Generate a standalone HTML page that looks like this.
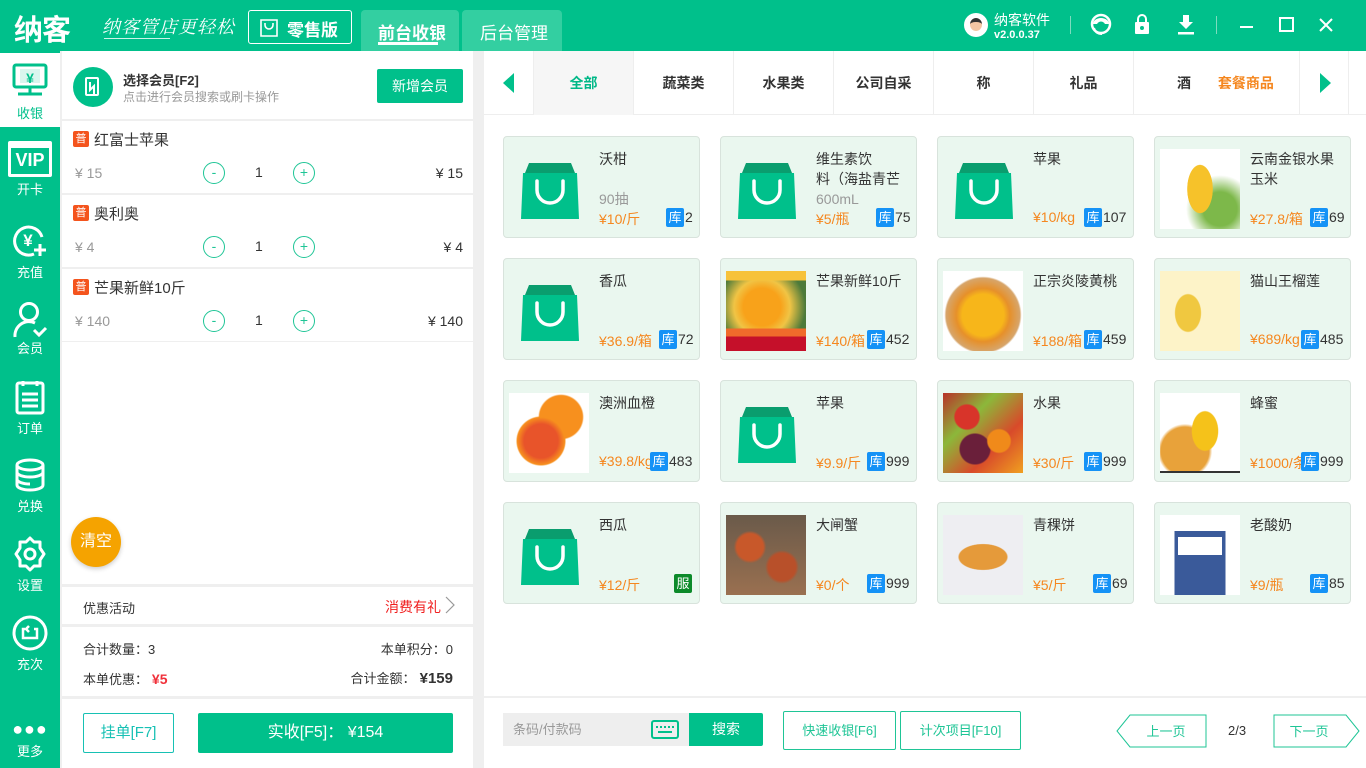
<!DOCTYPE html>
<html><head><meta charset="utf-8"><style>
*{margin:0;padding:0;box-sizing:border-box}
body{width:1366px;height:768px;overflow:hidden;background:#efefef;font-family:"Liberation Sans","Noto Sans CJK SC",sans-serif;color:#333;position:relative;font-size:14px}
.a{position:absolute}
.top{left:0;top:0;width:1366px;height:51px;background:#00c08b}
.side{left:0;top:51px;width:60px;height:717px;background:#00c08b}
.si{position:absolute;left:0;width:60px;text-align:center;color:#fff;font-size:13px}
.left{left:62px;top:51px;width:411px;height:717px;background:#fff}
.right{left:484px;top:51px;width:882px;height:717px;background:#fff}
.hl{position:absolute;left:0;width:411px;height:2px;background:#efefef}
.cart .nm{position:absolute;left:32px;font-size:15px;color:#333}
.tag{position:absolute;left:11px;width:16px;height:16px;background:#f4541d;color:#fff;font-size:11px;line-height:16px;text-align:center;border-radius:2px}
.circ{position:absolute;width:22px;height:22px;border:1px solid #1fc596;border-radius:50%;color:#1fc596;text-align:center;line-height:19px;font-size:14px}
.gray{color:#999}
.cat{position:absolute;top:0;height:64px;width:100px;line-height:64px;text-align:center;font-size:14px;color:#333;border-left:1px solid #eee;font-weight:bold;white-space:nowrap}
.card{position:absolute;width:197px;height:102px;background:#eaf7ef;border:1px solid #d8e3dc;border-radius:4px}
.card .n{position:absolute;left:95px;top:12px;width:96px;font-size:14px;line-height:20px;color:#333;overflow:hidden;height:42px}
.card .p{position:absolute;left:95px;top:72px;font-size:14px;color:#f5871f;width:72px;overflow:hidden;white-space:nowrap}
.card .k{position:absolute;left:162px;top:71px;font-size:14px;color:#333;white-space:nowrap}
.card .k b{display:inline-block;width:18px;height:19px;background:#1592f6;color:#fff;font-weight:normal;font-size:13px;text-align:center;line-height:19px;border-radius:2px;margin-right:1px}
.card .img{position:absolute;left:5px;top:12px;width:80px;height:80px}
.bag{position:absolute;left:17px;top:22px}
.btn{position:absolute;border:1px solid #1fc596;color:#1fc596;text-align:center;border-radius:2px;font-size:14px;background:#fff}
</style></head><body>
<div class="a top">
 <div class="a" style="left:14px;top:7px;font-size:29px;font-weight:bold;color:#fff;letter-spacing:-1px">纳客</div>
 <div class="a" style="left:102px;top:13px;font-size:18px;color:#fff;font-style:italic;letter-spacing:1px;font-family:'Noto Serif CJK SC',serif">纳客管店更轻松</div>
 <div class="a" style="left:104px;top:38px;width:66px;height:1px;background:#fff;opacity:.8"></div>
 <div class="a" style="left:248px;top:10px;width:104px;height:34px;border:1px solid #fff;border-radius:3px"></div>
 <svg class="a" style="left:259px;top:18px" width="20" height="20" viewBox="0 0 20 20"><path d="M2 2h16v16H2z" fill="none" stroke="#fff" stroke-width="1.6"/><path d="M6 5v2a4 4 0 0 0 8 0V5" fill="none" stroke="#fff" stroke-width="1.6"/></svg>
 <div class="a" style="left:287px;top:16px;color:#fff;font-size:17px;font-weight:bold">零售版</div>
 <div class="a" style="left:361px;top:10px;width:98px;height:41px;background:#33cfa1;border-radius:4px 4px 0 0"></div>
 <div class="a" style="left:378px;top:19px;color:#fff;font-size:17px;font-weight:bold">前台收银</div>
 <div class="a" style="left:378px;top:42px;width:60px;height:3px;background:#fff"></div>
 <div class="a" style="left:462px;top:10px;width:100px;height:41px;background:#33cfa1;border-radius:4px 4px 0 0"></div>
 <div class="a" style="left:480px;top:19px;color:#fff;font-size:17px">后台管理</div>
 <div class="a" style="left:964px;top:13px;width:24px;height:24px;border-radius:50%;background:#fff;overflow:hidden"><div style="margin:5px auto 0;width:12px;height:13px;border-radius:50%;background:#f3c6a4;border-top:4px solid #333"></div></div>
 <div class="a" style="left:994px;top:10px;color:#fff;font-size:14px">纳客软件</div>
 <div class="a" style="left:994px;top:29px;color:#fff;font-size:11px;font-weight:bold">v2.0.0.37</div>
 <div class="a" style="left:1070px;top:16px;width:1px;height:18px;background:#7ddcbf"></div>
 <svg class="a" style="left:1090px;top:13px" width="22" height="24" viewBox="0 0 22 24"><circle cx="11" cy="11" r="9" fill="none" stroke="#fff" stroke-width="2.5"/><path d="M3 11a8 6 0 0 1 16 0" fill="#fff"/><circle cx="11" cy="13" r="4.5" fill="#00c08b"/><path d="M4 15c1 4 4 6 8 6" stroke="#fff" stroke-width="2" fill="none"/></svg>
 <svg class="a" style="left:1134px;top:13px" width="16" height="22" viewBox="0 0 16 22"><path d="M4 9V6a4 4 0 0 1 8 0v3" fill="none" stroke="#fff" stroke-width="2"/><rect x="1" y="9" width="14" height="12" rx="1" fill="#fff"/><circle cx="8" cy="15" r="2" fill="#00c08b"/></svg>
 <svg class="a" style="left:1177px;top:14px" width="18" height="22" viewBox="0 0 18 22"><path d="M6 1h6v7h4l-7 7-7-7h4z" fill="#fff"/><rect x="1" y="18" width="16" height="2.5" fill="#fff"/></svg>
 <div class="a" style="left:1216px;top:16px;width:1px;height:18px;background:#7ddcbf"></div>
 <div class="a" style="left:1240px;top:26px;width:13px;height:2px;background:#fff"></div>
 <div class="a" style="left:1279px;top:17px;width:15px;height:15px;border:2px solid #fff"></div>
 <svg class="a" style="left:1319px;top:18px" width="14" height="14"><path d="M1 1l12 12M13 1L1 13" stroke="#fff" stroke-width="2"/></svg>
</div>
<div class="a side">
 <div class="si" style="top:2px;height:74px;background:#fff;color:#00c08b">
  <svg style="position:absolute;left:12px;top:10px" width="36" height="34" viewBox="0 0 36 34"><rect x="2" y="2" width="32" height="22" rx="2" fill="none" stroke="#00c08b" stroke-width="3"/><rect x="8" y="6" width="20" height="14" fill="#00c08b" opacity=".15"/><text x="18" y="20" text-anchor="middle" font-size="14" fill="#00c08b" font-weight="bold">¥</text><path d="M18 24v6M6 31h24" stroke="#00c08b" stroke-width="3"/></svg>
  <div style="position:absolute;top:50px;width:60px">收银</div>
 </div>
 <div class="si" style="top:90px"><div style="margin:0 auto;width:44px;height:36px;border:3px solid #fff;border-radius:2px;border-top-width:7px;font-weight:bold;font-size:18px;line-height:24px">VIP</div><div style="margin-top:2px">开卡</div></div>
 <div class="si" style="top:172px"><svg width="36" height="36" viewBox="0 0 36 36"><path d="M30 14A14 14 0 1 0 22 31" fill="none" stroke="#fff" stroke-width="3"/><text x="16" y="23" text-anchor="middle" font-size="17" fill="#fff" font-weight="bold">¥</text><path d="M28 21v12M22 27h12" stroke="#fff" stroke-width="3"/></svg><div>充值</div></div>
 <div class="si" style="top:250px"><svg width="36" height="38" viewBox="0 0 36 38"><circle cx="17" cy="11" r="8.5" fill="none" stroke="#fff" stroke-width="3"/><path d="M3 36a14 14 0 0 1 20-14" fill="none" stroke="#fff" stroke-width="3"/><path d="M22 29l5 5 7-7" fill="none" stroke="#fff" stroke-width="3"/></svg><div style="margin-top:-4px">会员</div></div>
 <div class="si" style="top:328px"><svg width="36" height="36" viewBox="0 0 36 36"><rect x="5" y="4" width="26" height="30" rx="2" fill="none" stroke="#fff" stroke-width="3"/><path d="M11 2v5M25 2v5M10 15h16M10 21h16M10 27h16" stroke="#fff" stroke-width="3"/></svg><div>订单</div></div>
 <div class="si" style="top:406px"><svg width="36" height="36" viewBox="0 0 36 36"><ellipse cx="18" cy="8" rx="13" ry="5" fill="none" stroke="#fff" stroke-width="3"/><path d="M5 8v20c0 3 6 5 13 5s13-2 13-5V8M5 15c0 3 6 5 13 5s13-2 13-5M5 22c0 3 6 5 13 5" fill="none" stroke="#fff" stroke-width="3"/></svg><div>兑换</div></div>
 <div class="si" style="top:485px"><svg width="36" height="36" viewBox="0 0 36 36"><path d="M18 2l4 4h6v6l4 6-4 6v6h-6l-4 4-4-4H8v-6l-4-6 4-6V6h6z" fill="none" stroke="#fff" stroke-width="3" stroke-linejoin="round"/><circle cx="18" cy="18" r="5" fill="none" stroke="#fff" stroke-width="3"/></svg><div>设置</div></div>
 <div class="si" style="top:564px"><svg width="36" height="36" viewBox="0 0 36 36"><circle cx="18" cy="18" r="16" fill="none" stroke="#fff" stroke-width="3"/><path d="M13 14h-2v9h14v-9h-3M17 11l-3 3 3 3" fill="none" stroke="#fff" stroke-width="2.5"/></svg><div>充次</div></div>
 <div class="si" style="top:672px"><div style="font-size:18px;letter-spacing:1px;line-height:12px">●●●</div><div style="margin-top:6px">更多</div></div>
</div>
<div class="a left cart">
 <div class="a" style="left:11px;top:16px;width:40px;height:40px;border-radius:50%;background:#00c08b"><svg width="40" height="40" viewBox="0 0 40 40"><rect x="13" y="11" width="12" height="17" rx="1" fill="none" stroke="#fff" stroke-width="2"/><path d="M17 15v8l4-4v9" fill="none" stroke="#fff" stroke-width="2"/></svg></div>
 <div class="a" style="left:61px;top:19px;font-size:13px;font-weight:bold;color:#333">选择会员[F2]</div>
 <div class="a" style="left:61px;top:37px;font-size:12px;color:#999">点击进行会员搜索或刷卡操作</div>
 <div class="a" style="left:315px;top:18px;width:86px;height:34px;background:#00c08b;border-radius:2px;color:#fff;text-align:center;line-height:34px;font-size:14px">新增会员</div>
 <div class="hl" style="top:68px"></div>
 <div class="tag" style="top:80px">普</div><div class="nm" style="top:78px">红富士苹果</div>
 <div class="a gray" style="left:13px;top:114px">¥ 15</div><div class="circ" style="left:141px;top:111px">-</div><div class="a" style="left:193px;top:113px">1</div><div class="circ" style="left:231px;top:111px">+</div><div class="a" style="right:10px;top:114px">¥ 15</div>
 <div class="hl" style="top:142px"></div>
 <div class="tag" style="top:154px">普</div><div class="nm" style="top:152px">奥利奥</div>
 <div class="a gray" style="left:13px;top:188px">¥ 4</div><div class="circ" style="left:141px;top:185px">-</div><div class="a" style="left:193px;top:187px">1</div><div class="circ" style="left:231px;top:185px">+</div><div class="a" style="right:10px;top:188px">¥ 4</div>
 <div class="hl" style="top:216px"></div>
 <div class="tag" style="top:228px">普</div><div class="nm" style="top:226px">芒果新鲜10斤</div>
 <div class="a gray" style="left:13px;top:262px">¥ 140</div><div class="circ" style="left:141px;top:259px">-</div><div class="a" style="left:193px;top:261px">1</div><div class="circ" style="left:231px;top:259px">+</div><div class="a" style="right:10px;top:262px">¥ 140</div>
 <div class="hl" style="top:290px;height:1px"></div>
 <div class="a" style="left:9px;top:466px;width:50px;height:50px;border-radius:50%;background:#f5a300;color:#fff;text-align:center;line-height:50px;font-size:16px;box-shadow:0 2px 5px rgba(0,0,0,.2)">清空</div>
 <div class="hl" style="top:533px;height:3px"></div>
 <div class="a" style="left:21px;top:547px;font-size:13px">优惠活动</div>
 <div class="a" style="left:323px;top:546px;font-size:14px;color:#f01f1f">消费有礼</div>
 <svg class="a" style="left:383px;top:545px" width="10" height="18"><path d="M1 1l8 8-8 8" fill="none" stroke="#999" stroke-width="1.2"/></svg>
 <div class="hl" style="top:573px;height:3px"></div>
 <div class="a" style="left:21px;top:588px;font-size:13px">合计数量：3</div>
 <div class="a" style="right:20px;top:588px;font-size:13px">本单积分：0</div>
 <div class="a" style="left:21px;top:618px;font-size:13px">本单优惠：<b style="color:#f0303a;font-size:14px">&nbsp;¥5</b></div>
 <div class="a" style="right:20px;top:617px;font-size:13px">合计金额：<b style="font-size:15px">&nbsp;¥159</b></div>
 <div class="hl" style="top:645px;height:3px"></div>
 <div class="btn" style="left:21px;top:662px;width:91px;height:40px;line-height:38px;border-color:#17c1b4;color:#17c1b4;font-size:15px">挂单[F7]</div>
 <div class="a" style="left:136px;top:662px;width:255px;height:40px;background:#00c08b;color:#fff;text-align:center;line-height:40px;font-size:16px;border-radius:2px">实收[F5]： ¥154</div>
</div>
<div class="a right">
 <div class="a" style="left:0;top:0;width:882px;height:64px;border-bottom:1px solid #eee">
  <svg class="a" style="left:19px;top:22px" width="12" height="20"><path d="M11 0v20L0 10z" fill="#00c08b"/></svg>
  <div class="cat" style="left:49px;background:#f6f6f6;color:#00b887">全部</div>
  <div class="cat" style="left:149px">蔬菜类</div>
  <div class="cat" style="left:249px">水果类</div>
  <div class="cat" style="left:349px">公司自采</div>
  <div class="cat" style="left:449px">称</div>
  <div class="cat" style="left:549px">礼品</div>
  <div class="cat" style="left:649px;width:166px;text-align:left;padding-left:43px">酒 <span style="color:#f5871f;margin-left:23px">套餐商品</span></div>
  <div class="cat" style="left:815px;width:50px;border-right:1px solid #eee"></div>
  <svg class="a" style="left:835px;top:22px" width="12" height="20"><path d="M1 0v20l11-10z" fill="#00c08b"/></svg>
 </div>
 <div class="a" style="left:0;top:645px;width:882px;height:2px;background:#efefef"></div>
 <div class="a" style="left:19px;top:662px;width:186px;height:33px;background:#eee;color:#999;font-size:13px;line-height:33px;padding-left:10px">条码/付款码</div>
 <svg class="a" style="left:167px;top:669px" width="28" height="19"><rect x="1" y="1" width="26" height="17" rx="2" fill="none" stroke="#00c08b" stroke-width="2"/><path d="M5 7h2M9 7h2M13 7h2M17 7h2M21 7h2M7 12h14" stroke="#00c08b" stroke-width="2"/></svg>
 <div class="a" style="left:205px;top:662px;width:74px;height:33px;background:#00c08b;color:#fff;text-align:center;line-height:33px;font-size:14px;border-radius:0 2px 2px 0">搜索</div>
 <div class="btn" style="left:299px;top:660px;width:113px;height:39px;line-height:37px;font-size:13px">快速收银[F6]</div>
 <div class="btn" style="left:416px;top:660px;width:121px;height:39px;line-height:37px;font-size:13px">计次项目[F10]</div>
 <svg class="a" style="left:632px;top:663px" width="92" height="34"><path d="M14 1h76v32H14L1 17z" fill="#fff" stroke="#1fc596"/><text x="50" y="22" text-anchor="middle" font-size="13" fill="#1fc596" font-family="Liberation Sans,Noto Sans CJK SC">上一页</text></svg>
 <div class="a" style="left:744px;top:672px;font-size:13px">2/3</div>
 <svg class="a" style="left:789px;top:663px" width="88" height="34"><path d="M1 1h72l13 16-13 16H1z" fill="#fff" stroke="#1fc596"/><text x="36" y="22" text-anchor="middle" font-size="13" fill="#1fc596" font-family="Liberation Sans,Noto Sans CJK SC">下一页</text></svg>
</div>
<svg width="0" height="0" style="position:absolute"><defs><g id="bag"><path d="M8 4h42l4 10H4z" fill="#0a9d6e"/><path d="M2 14h54l2 46H0z" fill="#00c08b"/><path d="M16 22v9a13 13 0 0 0 26 0v-9" fill="none" stroke="#fff" stroke-width="3.5" stroke-linecap="round"/></g></defs></svg>

<div class="card" style="left:503px;top:136px"><svg class="bag" width="58" height="62"><use href="#bag"/></svg><div class="n" style="height:62px">沃柑<br><br><span class="gray">90抽</span></div><div class="p">¥10/斤</div><div class="k"><b>库</b>2</div></div>
<div class="card" style="left:720px;top:136px"><svg class="bag" width="58" height="62"><use href="#bag"/></svg><div class="n" style="height:62px">维生素饮<br>料（海盐青芒<br><span class="gray">600mL</span></div><div class="p">¥5/瓶</div><div class="k" style="left:155px"><b>库</b>75</div></div>
<div class="card" style="left:937px;top:136px"><svg class="bag" width="58" height="62"><use href="#bag"/></svg><div class="n">苹果</div><div class="p">¥10/kg</div><div class="k" style="left:146px"><b>库</b>107</div></div>
<div class="card" style="left:1154px;top:136px"><div class="img" style="background:radial-gradient(ellipse 18px 34px at 40px 40px,#f6c22a 70%,transparent 72%),radial-gradient(circle at 60px 60px,#7db84a 20%,transparent 40%),#fff"></div><div class="n">云南金银水果玉米</div><div class="p">¥27.8/箱</div><div class="k" style="left:155px"><b>库</b>69</div></div>

<div class="card" style="left:503px;top:258px"><svg class="bag" width="58" height="62"><use href="#bag"/></svg><div class="n">香瓜</div><div class="p">¥36.9/箱</div><div class="k" style="left:155px"><b>库</b>72</div></div>
<div class="card" style="left:720px;top:258px"><div class="img" style="background:linear-gradient(#f7c23a 0 12%,transparent 12%),linear-gradient(to top,#c5102a 0 18%,#f06a2b 18% 28%,transparent 28%),radial-gradient(ellipse at 45% 45%,#f8a21a 30%,#f0c445 45%,#4c7a3a 70%)"></div><div class="n">芒果新鲜10斤</div><div class="p">¥140/箱</div><div class="k" style="left:146px"><b>库</b>452</div></div>
<div class="card" style="left:937px;top:258px"><div class="img" style="background:radial-gradient(circle at 50% 55%,#f7b61a 35%,#e6902a 45%,#d7a56a 62%,#fff 65%)"></div><div class="n">正宗炎陵黄桃</div><div class="p">¥188/箱</div><div class="k" style="left:146px"><b>库</b>459</div></div>
<div class="card" style="left:1154px;top:258px"><div class="img" style="background:radial-gradient(ellipse 18px 26px at 28px 42px,#f0c840 70%,transparent 75%),#fdf3c8"></div><div class="n">猫山王榴莲</div><div class="p">¥689/kg</div><div class="k" style="left:146px"><b>库</b>485</div></div>

<div class="card" style="left:503px;top:380px"><div class="img" style="background:radial-gradient(circle at 40% 60%,#e8542a 25%,#f7901e 35%,transparent 37%),radial-gradient(circle at 65% 30%,#f7901e 28%,transparent 30%),#fff"></div><div class="n">澳洲血橙</div><div class="p">¥39.8/kg</div><div class="k" style="left:146px"><b>库</b>483</div></div>
<div class="card" style="left:720px;top:380px"><svg class="bag" width="58" height="62"><use href="#bag"/></svg><div class="n">苹果</div><div class="p">¥9.9/斤</div><div class="k" style="left:146px"><b>库</b>999</div></div>
<div class="card" style="left:937px;top:380px"><div class="img" style="background:radial-gradient(circle at 30% 30%,#d8342a 15%,transparent 17%),radial-gradient(circle at 70% 60%,#f08a1a 15%,transparent 17%),radial-gradient(circle at 40% 70%,#6a1f3a 20%,transparent 22%),linear-gradient(135deg,#b8322a,#8cb83a,#d84a2a,#f0a020)"></div><div class="n">水果</div><div class="p">¥30/斤</div><div class="k" style="left:146px"><b>库</b>999</div></div>
<div class="card" style="left:1154px;top:380px"><div class="img" style="background:radial-gradient(ellipse 16px 24px at 45px 38px,#f5c21a 80%,transparent 85%),radial-gradient(circle at 25px 58px,#e8a23a 30%,transparent 34%),#fff;border-bottom:2px solid #333"></div><div class="n">蜂蜜</div><div class="p">¥1000/条</div><div class="k" style="left:146px"><b>库</b>999</div></div>

<div class="card" style="left:503px;top:502px"><svg class="bag" width="58" height="62"><use href="#bag"/></svg><div class="n">西瓜</div><div class="p">¥12/斤</div><div class="k" style="left:170px"><b style="background:#0c8a2a">服</b></div></div>
<div class="card" style="left:720px;top:502px"><div class="img" style="background:radial-gradient(circle at 30% 40%,#c8582a 18%,transparent 22%),radial-gradient(circle at 70% 65%,#b8502a 18%,transparent 22%),linear-gradient(#6a5a4a,#9a7050)"></div><div class="n">大闸蟹</div><div class="p">¥0/个</div><div class="k" style="left:146px"><b>库</b>999</div></div>
<div class="card" style="left:937px;top:502px"><div class="img" style="background:radial-gradient(ellipse 34px 18px at 40px 42px,#e59a3a 70%,transparent 74%),#eeeef2"></div><div class="n">青稞饼</div><div class="p">¥5/斤</div><div class="k" style="left:155px"><b>库</b>69</div></div>
<div class="card" style="left:1154px;top:502px"><div class="img" style="background:linear-gradient(#fff 20%,transparent 20%),linear-gradient(90deg,#fff 18%,#3a5a9a 18% 82%,#fff 82%)"><div style="position:absolute;left:18px;top:22px;width:44px;height:18px;background:#fff"></div></div><div class="n">老酸奶</div><div class="p">¥9/瓶</div><div class="k" style="left:155px"><b>库</b>85</div></div>
</body></html>
